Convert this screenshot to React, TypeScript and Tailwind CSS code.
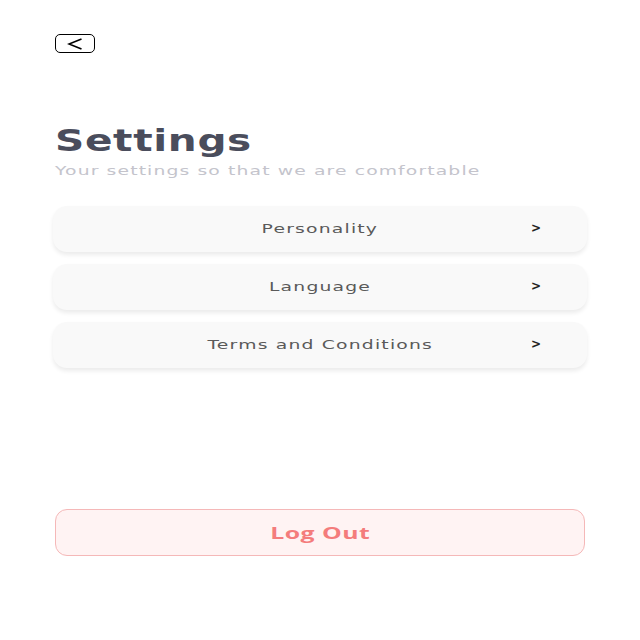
import React from 'react';

const ITEMS = ['Personality', 'Language', 'Terms and Conditions'];

export default function App() {
  return (
    <div className="w-[640px] h-[640px] bg-white px-[53px] flex flex-col" style={{ fontFamily: '"DejaVu Sans", sans-serif' }}>
      <button className="mt-[34px] ml-[2px] w-[40px] h-[19px] border border-black rounded-[5px] flex items-center justify-center">
        <svg width="16" height="12" viewBox="0 0 16 12" fill="none">
          <path d="M14.5 1L2 6l12.5 5" stroke="#000" strokeWidth="1.7" strokeLinejoin="miter" />
        </svg>
      </button>

      <h1 className="self-start mt-[67px] ml-[2px] origin-left scale-x-[1.31] text-[31px] leading-[40px] font-bold text-[#4a4d5c] tracking-[0.5px]">
        Settings
      </h1>
      <p className="self-start mt-[3px] ml-[2px] origin-left scale-x-[1.5] text-[12.5px] leading-[16px] text-[#c4c4cc] tracking-[0.75px]">
        Your settings so that we are comfortable
      </p>

      <div className="mt-[27px] flex flex-col gap-[12px]">
        {ITEMS.map((item) => (
          <div
            key={item}
            className="relative h-[46px] rounded-[14px] bg-[#f9f9f9] shadow-[0_3px_4px_rgba(0,0,0,0.08)] flex items-center justify-center"
          >
            <span className="scale-x-[1.5] text-[12.5px] text-[#5a5a5a] tracking-[0.8px]">{item}</span>
            <span className="absolute left-[478px] top-[13px] text-[12px] font-bold text-[#222]">&gt;</span>
          </div>
        ))}
      </div>

      <button
        className="mt-[141px] mx-[2px] h-[47px] rounded-[12px] border border-[#f5b8b8] bg-[#fff3f3] flex items-center justify-center"
        style={{ fontFamily: '"Open Sans", sans-serif' }}
      >
        <span className="scale-x-[1.55] text-[16px] font-bold text-[#f47c7c] tracking-[0.3px]">Log Out</span>
      </button>
    </div>
  );
}
